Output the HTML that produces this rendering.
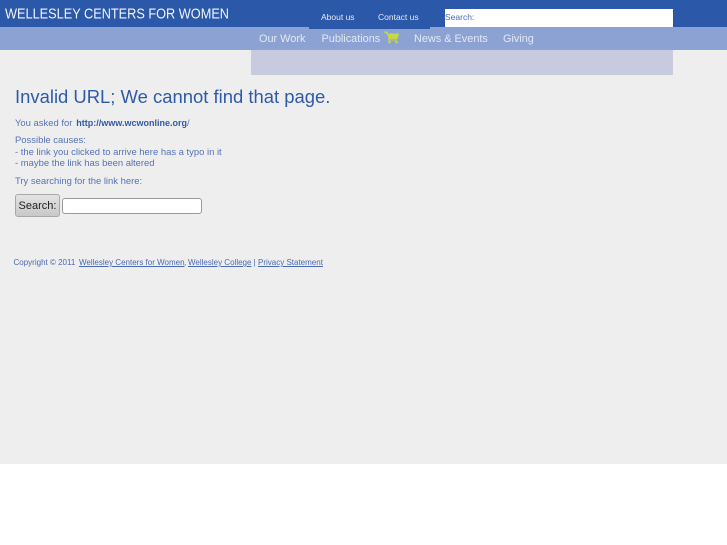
<!DOCTYPE html>
<html>
<head>
<meta charset="utf-8">
<title>Wellesley Centers for Women</title>
<style>
html,body{margin:0;padding:0;background:#fff;}
body{width:727px;height:545px;position:relative;overflow:hidden;font-family:"Liberation Sans",Arial,sans-serif;}
div,a,span,input{position:absolute;white-space:nowrap;}
.t{color:#5573b5;font-size:9.45px;line-height:12px;left:15px;filter:blur(.25px);}
a{color:#3f62ae;}
.n{color:#e3e8f4;font-size:10.9px;line-height:14px;top:32px;filter:blur(.25px);}
.s{color:#e6ebf6;font-size:8.5px;line-height:10px;top:12px;filter:blur(.2px);}
.f{font-size:8px;line-height:10px;top:258px;color:#4a6ab0;filter:blur(.2px);}
</style>
</head>
<body>
<div style="left:0;top:0;width:727px;height:464px;background:#eeeeee;"></div>
<div style="left:0;top:0;width:727px;height:27px;background:#2b58a8;"></div>
<div style="left:0;top:27px;width:727px;height:23px;background:#8ba2d3;"></div>
<div style="left:251px;top:50px;width:422px;height:25px;background:#c8cbe0;"></div>
<div style="left:309px;top:27px;width:121px;height:2px;background:#2b58a8;"></div>

<svg style="position:absolute;left:0;top:0;filter:blur(.2px)" width="240" height="27"><text x="5" y="18.5" font-family="Liberation Sans" font-size="14.5" fill="#f1f4fa" textLength="224" lengthAdjust="spacingAndGlyphs">WELLESLEY CENTERS FOR WOMEN</text></svg>

<span class="s" style="left:321px;">About us</span>
<span class="s" style="left:378px;">Contact us</span>
<div style="left:445px;top:9px;width:228px;height:18px;background:#fff;"></div>
<span style="left:445px;top:12px;font-size:8.5px;line-height:10px;color:#4a6ab8;">Search:</span>

<span class="n" style="left:259px;">Our Work</span>
<span class="n" style="left:321.5px;">Publications</span>
<svg style="position:absolute;left:384px;top:31px" width="16" height="13" viewBox="0 0 16 13"><path d="M0.5 1H3L5 7.5H13L14.5 3H3.5Z" fill="#c6d84a" stroke="#c6d84a" stroke-width="1"/><path d="M5 7.5L4.5 9H13" fill="none" stroke="#c6d84a" stroke-width="1"/><circle cx="5.5" cy="11" r="1.3" fill="#c6d84a"/><circle cx="12.5" cy="11" r="1.3" fill="#c6d84a"/></svg>
<span class="n" style="left:414px;">News &amp; Events</span>
<span class="n" style="left:503px;">Giving</span>

<div style="left:15px;top:85px;font-size:18.45px;line-height:23px;color:#2f5aa8;filter:blur(.25px);">Invalid URL; We cannot find that page.</div>
<div class="t" style="top:116.5px;">You asked for <b style="color:#2f5aa8;font-size:9px;margin-left:1.3px;">http://www.wcwonline.org</b>/</div>
<div class="t" style="top:134.5px;">Possible causes:</div>
<div class="t" style="top:146.5px;">- the link you clicked to arrive here has a typo in it</div>
<div class="t" style="top:157.5px;">- maybe the link has been altered</div>
<div class="t" style="top:175.5px;">Try searching for the link here:</div>

<div style="left:15px;top:194px;width:43px;height:21px;border:1px solid #a8a8a8;border-radius:3px;background:linear-gradient(#e4e4e4,#c8c8c8);color:#222;font-size:11px;line-height:22px;text-align:center;">Search:</div>
<div style="left:62px;top:198px;width:138px;height:14px;border:1px solid #9a9a9a;border-radius:3px;background:#fff;"></div>

<span class="f" style="left:13.5px;">Copyright © 2011</span>
<a class="f" style="left:79px;text-decoration:underline;">Wellesley Centers for Women</a>
<span class="f" style="left:184px;">,</span>
<a class="f" style="left:188px;text-decoration:underline;">Wellesley College</a>
<span class="f" style="left:253.5px;">|</span>
<a class="f" style="left:258px;text-decoration:underline;">Privacy Statement</a>
</body>
</html>
